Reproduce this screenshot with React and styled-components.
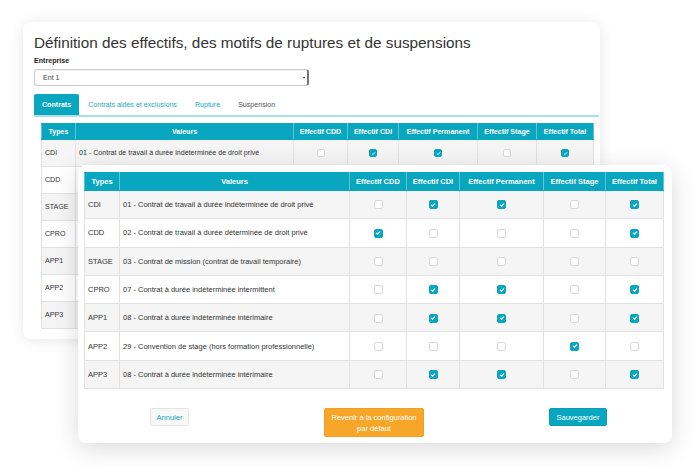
import styled, { createGlobalStyle } from "styled-components";

const GlobalStyle = createGlobalStyle`
  html, body {
    margin: 0;
    padding: 0;
    background: #fff;
  }
  body {
    font-family: "Liberation Sans", Arial, sans-serif;
    color: #333;
  }
`;

const TEAL = "#08a7bf";

const rows = [
  ["CDI", "01 - Contrat de travail à durée indéterminée de droit privé", [0, 1, 1, 0, 1]],
  ["CDD", "02 - Contrat de travail à durée déterminée de droit privé", [1, 0, 0, 0, 1]],
  ["STAGE", "03 - Contrat de mission (contrat de travail temporaire)", [0, 0, 0, 0, 0]],
  ["CPRO", "07 - Contrat à durée indéterminée intermittent", [0, 1, 1, 0, 1]],
  ["APP1", "08 - Contrat à durée indéterminée intérimaire", [0, 1, 1, 0, 1]],
  ["APP2", "29 - Convention de stage (hors formation professionnelle)", [0, 0, 0, 1, 0]],
  ["APP3", "08 - Contrat à durée indéterminée intérimaire", [0, 1, 1, 0, 1]],
];

const headers = [
  "Types",
  "Valeurs",
  "Effectif CDD",
  "Effectif CDI",
  "Effectif Permanent",
  "Effectif Stage",
  "Effectif Total",
];

const sizes = {
  back: { font: 7.1, head: 15, row: 27, box: 8, cols: [34, 218, 54, 51, 79, 59, 57] },
  front: { font: 7.5, head: 17, row: 28.3, box: 9, cols: [35, 230, 57, 53, 84, 62, 58] },
};

const Page = styled.div`
  position: relative;
  width: 700px;
  height: 471px;
  overflow: hidden;
  padding: 22px 0 0 23px;
  box-sizing: border-box;
`;

const BackCard = styled.div`
  width: 577px;
  height: 317px;
  background: #fff;
  border-radius: 8px;
  box-shadow: 0 1px 14px rgba(0, 0, 0, 0.1);
  padding: 11px 0 0 11px;
  box-sizing: border-box;
`;

const FrontCard = styled.div`
  position: absolute;
  left: 78px;
  top: 165px;
  width: 594px;
  height: 278px;
  background: #fff;
  border-radius: 8px;
  box-shadow: 0 5px 24px rgba(0, 0, 0, 0.15);
  padding: 7px 0 0 6px;
  box-sizing: border-box;
  display: flex;
  flex-direction: column;
`;

const Title = styled.h1`
  margin: 0;
  font-size: 15.3px;
  line-height: 20px;
  font-weight: 400;
  color: #333;
`;

const Label = styled.div`
  margin-top: 3px;
  font-size: 7.1px;
  line-height: 10px;
  font-weight: 700;
  color: #222;
`;

const Select = styled.div`
  margin-top: 3px;
  width: 275px;
  height: 17px;
  box-sizing: border-box;
  border: 1px solid #ccc;
  border-right: 2px solid #777;
  border-radius: 3px;
  box-shadow: inset 0 1px 1px rgba(0, 0, 0, 0.06);
  display: flex;
  align-items: center;
  justify-content: space-between;
  padding: 0 2px 0 8px;
  font-size: 7.1px;
  color: #444;
`;

const Arrow = styled.span`
  width: 0;
  height: 0;
  border-left: 1.5px solid transparent;
  border-right: 1.5px solid transparent;
  border-top: 2px solid #333;
`;

const TabBar = styled.div`
  margin-top: 8px;
  width: 565px;
  display: flex;
  align-items: stretch;
  height: 21px;
  border-bottom: 2px solid #a9e0e8;
`;

const Tab = styled.div`
  display: flex;
  align-items: center;
  padding: 0 ${(p) => p.$pad || 9}px;
  font-size: 7.1px;
  font-weight: ${(p) => (p.$active ? 700 : 400)};
  color: ${(p) => (p.$active ? "#fff" : p.$muted ? "#555" : "#1aa8bf")};
  background: ${(p) => (p.$active ? TEAL : "transparent")};
  border-radius: 2px 2px 0 0;
`;

const TabPanel = styled.div`
  padding: 6px 0 0 7px;
`;

const Table = styled.table`
  border-collapse: collapse;
  table-layout: fixed;
  font-size: ${(p) => p.$s.font}px;
  color: #333;
`;

const Head = styled.th`
  height: ${(p) => p.$s.head}px;
  padding: 0;
  background: ${TEAL};
  color: #fff;
  font-weight: 700;
  text-align: center;
  border: 1px solid #5cc6d6;
  border-top-color: ${TEAL};
  border-bottom-color: ${TEAL};
  white-space: nowrap;
`;

const Row = styled.tr`
  height: ${(p) => p.$s.row}px;
  background: ${(p) => (p.$odd ? "#f5f5f5" : "#fff")};
`;

const Cell = styled.td`
  padding: 0 ${(p) => (p.$text ? 3 : 0)}px;
  border: 1px solid #e2e2e2;
  text-align: ${(p) => (p.$text ? "left" : "center")};
  white-space: nowrap;
  overflow: hidden;
  vertical-align: middle;
`;

const Box = styled.span`
  display: inline-flex;
  align-items: center;
  justify-content: center;
  width: ${(p) => p.$size}px;
  height: ${(p) => p.$size}px;
  box-sizing: border-box;
  border-radius: 2px;
  background: ${(p) => (p.$on ? TEAL : "#fff")};
  border: 1px solid ${(p) => (p.$on ? TEAL : "#d9d9d9")};
  vertical-align: middle;
`;

const Check = ({ on, size }) => (
  <Box $on={on} $size={size}>
    {on && (
      <svg width={size - 3} height={size - 3} viewBox="0 0 10 10">
        <path d="M2.2 5.3 L4.2 7.2 L7.8 3" fill="none" stroke="#fff" strokeWidth="1.8" strokeLinecap="round" strokeLinejoin="round" />
      </svg>
    )}
  </Box>
);

const ContractsTable = ({ variant }) => {
  const s = sizes[variant];
  const total = s.cols.reduce((a, b) => a + b, 0);
  return (
    <Table $s={s} style={{ width: total }}>
      <colgroup>
        {s.cols.map((w, i) => (
          <col key={i} style={{ width: w }} />
        ))}
      </colgroup>
      <thead>
        <tr>
          {headers.map((h) => (
            <Head key={h} $s={s}>
              {h}
            </Head>
          ))}
        </tr>
      </thead>
      <tbody>
        {rows.map(([type, label, flags], i) => (
          <Row key={type} $s={s} $odd={i % 2 === 0}>
            <Cell $text>{type}</Cell>
            <Cell $text>{label}</Cell>
            {flags.map((f, j) => (
              <Cell key={j}>
                <Check on={!!f} size={s.box} />
              </Cell>
            ))}
          </Row>
        ))}
      </tbody>
    </Table>
  );
};

const Actions = styled.div`
  margin-top: 19px;
  display: flex;
  align-items: flex-start;
  padding-left: 66px;
`;

const Button = styled.button`
  font-family: "Liberation Sans", Arial, sans-serif;
  font-size: 7.5px;
  line-height: 11px;
  border-radius: 2px;
  padding: 0;
  cursor: pointer;
  width: ${(p) => p.$w}px;
  height: ${(p) => p.$h || 18}px;
  margin-left: ${(p) => p.$gap || 0}px;
  color: ${(p) => (p.$kind === "ghost" ? "#1aa8bf" : "#fff")};
  background: ${(p) =>
    p.$kind === "ghost" ? "#f8f8f8" : p.$kind === "warn" ? "#f8a62a" : TEAL};
  border: 1px solid
    ${(p) =>
      p.$kind === "ghost" ? "#e4e4e4" : p.$kind === "warn" ? "#f1a025" : "#079fb6"};
`;

export default function App() {
  return (
    <>
      <GlobalStyle />
      <Page>
        <BackCard>
          <Title>Définition des effectifs, des motifs de ruptures et de suspensions</Title>
          <Label>Entreprise</Label>
          <Select>
            <span>Ent 1</span>
            <Arrow />
          </Select>
          <TabBar>
            <Tab $active $pad={8}>Contrats</Tab>
            <Tab>Contrats aidés et exclusions</Tab>
            <Tab>Rupture</Tab>
            <Tab $muted>Suspension</Tab>
          </TabBar>
          <TabPanel>
            <ContractsTable variant="back" />
          </TabPanel>
        </BackCard>

        <FrontCard>
          <ContractsTable variant="front" />
          <Actions>
            <Button $kind="ghost" $w={39}>
              Annuler
            </Button>
            <Button $kind="warn" $w={100} $h={29} $gap={135}>
              Revenir à la configuration
              <br />
              par défaut
            </Button>
            <Button $w={58} $gap={125}>
              Sauvegarder
            </Button>
          </Actions>
        </FrontCard>
      </Page>
    </>
  );
}
